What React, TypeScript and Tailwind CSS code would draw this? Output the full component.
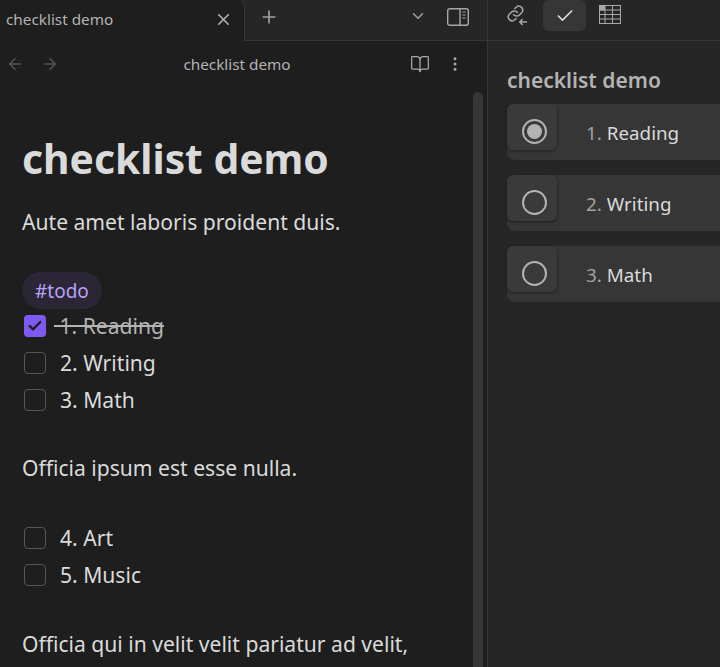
import * as React from 'react';
import { ArrowLeft, ArrowRight, BookOpen, Check, ChevronDown, MoreVertical, Plus, X } from 'lucide-react';

function SidebarIcon() {
  return (
    <svg width="24" height="20" viewBox="0 0 24 20" fill="none" stroke="#a8a8a8" strokeWidth="1.4">
      <rect x="1.7" y="1.7" width="20.6" height="16.6" rx="2" />
      <path d="M14 1.7v16.6" />
      <path d="M16.5 5h3M16.5 8h3M16.5 11h3" strokeWidth="1.2" />
    </svg>
  );
}

function BacklinkIcon() {
  return (
    <svg width="22" height="22" viewBox="0 0 22 22" fill="none" stroke="#a8a8a8" strokeWidth="1.5" strokeLinecap="round" strokeLinejoin="round">
      <path d="M7.6 10.6a3.9 3.9 0 0 0 5.8.4l2.3-2.3a3.9 3.9 0 0 0-5.5-5.5L8.9 4.5" />
      <path d="M11.4 8.4a3.9 3.9 0 0 0-5.8-.4l-2.3 2.3a3.9 3.9 0 0 0 5.5 5.5l1.2-1.2" />
      <path d="M20.5 18h-6.8M16.2 15.5 13.7 18l2.5 2.5" />
    </svg>
  );
}

function TableIcon() {
  return (
    <svg width="24" height="20" viewBox="0 0 24 20" fill="none" stroke="#a8a8a8" strokeWidth="1">
      <rect x="1.5" y="0.5" width="21" height="18" />
      <rect x="1.5" y="0.5" width="5" height="4.5" fill="#a8a8a8" />
      <path d="M1.5 5h21M1.5 9.5h21M1.5 14h21M7 0.5V18.5M14.5 0.5V18.5" />
    </svg>
  );
}

function TaskRow({ label, checked }: { label: string; checked?: boolean }) {
  return (
    <div className="flex items-center h-[37px] pl-[24px]">
      {checked ? (
        <span className="w-[22px] h-[22px] rounded-[4px] bg-[#7f5af0] flex items-center justify-center shrink-0">
          <Check size={16} strokeWidth={3.5} className="text-[#1e1e1e]" />
        </span>
      ) : (
        <span className="w-[22px] h-[22px] rounded-[4px] border border-[#555555] shrink-0" />
      )}
      {checked ? (
        <span className="ml-[8px] text-[#b3b3b3] line-through whitespace-pre">{'\u00a0' + label}</span>
      ) : (
        <span className="ml-[14px]">{label}</span>
      )}
    </div>
  );
}

function Card({ num, label, active }: { num: string; label: string; active?: boolean }) {
  return (
    <div className="h-[56px] rounded-l-[8px] bg-[#363636] flex items-start">
      <div className="w-[50px] h-[46px] rounded-[6px] bg-[#3a3a3a] shadow-[0_1px_3px_rgba(0,0,0,0.45)] pl-[15px] pt-[15px]">
        <span className="w-[25px] h-[25px] rounded-full border-2 border-[#b3b3b3] flex items-center justify-center">
          {active && <span className="w-[15px] h-[15px] rounded-full bg-[#b3b3b3]" />}
        </span>
      </div>
      <div className="ml-[29px] h-[58px] flex items-center text-[18.8px] text-[#dadada]">
        <span className="text-[#a3a3a3]">{num}</span>
        <span className="ml-[5px]">{label}</span>
      </div>
    </div>
  );
}

export default function App() {
  return (
    <div className="w-[720px] h-[667px] overflow-hidden flex bg-[#1e1e1e] text-[#dadada] text-[21.1px] font-['Noto_Sans','Open_Sans',sans-serif]">
      <div className="w-[487px] shrink-0 flex flex-col">
        <div className="h-[41px] flex items-stretch bg-[#262626]">
          <div className="w-[245px] bg-[#1e1e1e] rounded-tr-[8px] border-r border-[#363636] flex items-center pb-[2px] pl-[6px] pr-[11px] text-[15.3px] text-[#b3b3b3]">
            <span className="flex-1 whitespace-nowrap">checklist demo</span>
            <X size={19} className="text-[#b3b3b3]" />
          </div>
          <div className="flex-1 flex items-center border-b border-[#363636] pb-[7px] pl-[14px] pr-[17px]">
            <Plus size={20} className="text-[#a0a0a0]" />
            <ChevronDown size={18} className="text-[#a0a0a0] ml-auto mr-[19px] -translate-y-px" />
            <SidebarIcon />
          </div>
        </div>
        <div className="h-[48px] flex items-center pb-[2px] pl-[6px] pr-[24px] text-[15.3px] text-[#b3b3b3]">
          <ArrowLeft size={18} className="text-[#555555]" />
          <ArrowRight size={18} className="text-[#555555] ml-[17px]" />
          <span className="flex-1 text-center whitespace-nowrap pl-[5px]">checklist demo</span>
          <BookOpen size={20} strokeWidth={1.5} className="text-[#a8a8a8]" />
          <MoreVertical size={18} className="text-[#a8a8a8] ml-[16px] mr-[-1px]" />
        </div>
        <div className="flex-1 flex overflow-hidden">
          <div className="flex-1 min-w-0">
            <h1 className="mt-[38px] pl-[22px] text-[40.8px] leading-[62px] font-bold whitespace-nowrap">checklist demo</h1>
            <p className="pl-[22px] mt-[18px] leading-[30px]">Aute amet laboris proident duis.</p>
            <div className="pl-[22px] mt-[35px]">
              <span className="inline-flex items-center h-[37px] pt-[2px] px-[13px] rounded-full bg-[#2a2636] text-[19px] text-[#b8a2f5]">#todo</span>
            </div>
            <div className="mt-[-2px]">
              <TaskRow label="1. Reading" checked />
              <TaskRow label="2. Writing" />
              <TaskRow label="3. Math" />
            </div>
            <p className="pl-[22px] mt-[35px] leading-[30px]">Officia ipsum est esse nulla.</p>
            <div className="mt-[36px]">
              <TaskRow label="4. Art" />
              <TaskRow label="5. Music" />
            </div>
            <p className="pl-[22px] mt-[36px] leading-[30px] whitespace-nowrap">Officia qui in velit velit pariatur ad velit,</p>
          </div>
          <div className="w-[14px] shrink-0 pt-[3px] flex justify-start">
            <div className="w-[10px] h-[600px] rounded-full bg-[#363636]" />
          </div>
        </div>
      </div>
      <div className="flex-1 min-w-0 flex flex-col bg-[#262626] border-l border-[#363636]">
        <div className="h-[41px] border-b border-[#363636] flex items-start pl-[18px] gap-[15px]">
          <div className="h-[30px] flex items-center"><BacklinkIcon /></div>
          <div className="w-[43px] h-[31px] rounded-[6px] bg-[#363636] flex items-center justify-center">
            <Check size={20} strokeWidth={2} className="text-[#dadada]" />
          </div>
          <div className="h-[29px] flex items-center -ml-[3px]"><TableIcon /></div>
        </div>
        <div className="pl-[19px] pt-[24px] flex flex-col">
          <h2 className="text-[21px] leading-[30px] font-semibold text-[#b3b3b3] whitespace-nowrap">checklist demo</h2>
          <div className="mt-[9px] flex flex-col gap-[15px]">
            <Card num="1." label="Reading" active />
            <Card num="2." label="Writing" />
            <Card num="3." label="Math" />
          </div>
        </div>
      </div>
    </div>
  );
}
